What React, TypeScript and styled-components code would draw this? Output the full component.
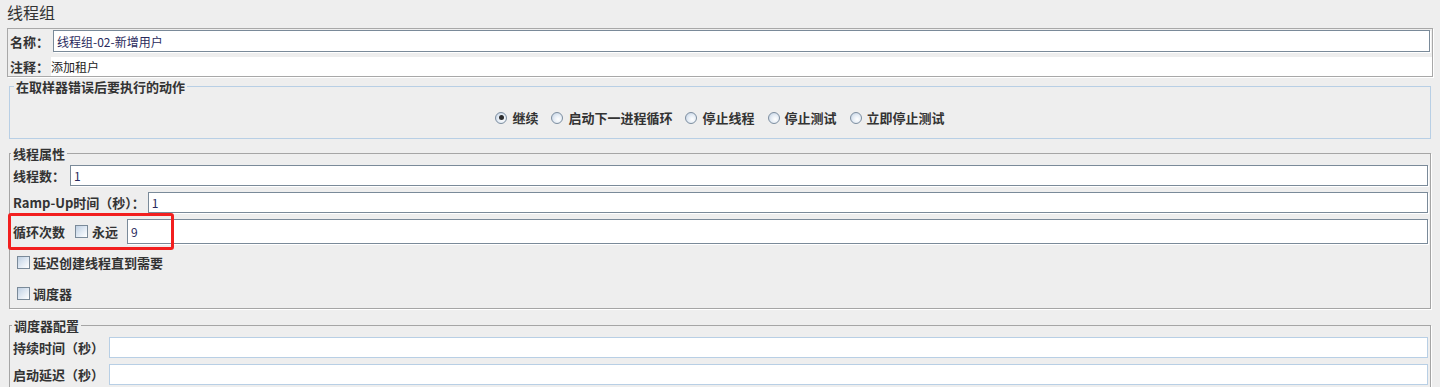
import * as React from "react";
import styled, { createGlobalStyle } from "styled-components";

const GlobalStyle = createGlobalStyle`
  html, body {
    margin: 0;
    padding: 0;
    background: #eeeeee;
    overflow: hidden;
  }
  body {
    font-family: "Noto Sans CJK SC", "Liberation Sans", sans-serif;
    font-size: 12px;
    color: #333333;
  }
  #root {
    width: 1440px;
    height: 387px;
    overflow: hidden;
  }
`;

const Page = styled.div`
  padding: 0 7px;
`;

const Title = styled.h1`
  margin: 0;
  height: 28px;
  font-size: 16px;
  line-height: 24px;
  font-weight: 400;
  color: #333;
`;

const NamePanel = styled.div`
  border: 1px solid #a8a8a8;
  box-shadow: 1px 1px 0 #fff;
  padding: 1px 0 0 2px;
`;

const Row = styled.div<{ $height?: number }>`
  display: flex;
  align-items: center;
  height: ${(p) => p.$height ?? 21}px;
`;

const NameRow = styled(Row)`
  padding-right: 2px;
  margin-bottom: 5px;
`;

const Label = styled.span<{ $gap?: number; $lead?: number }>`
  font-size: 13px;
  font-weight: 700;
  white-space: nowrap;
  color: #333;
  margin-left: ${(p) => p.$lead ?? 0}px;
  margin-right: ${(p) => p.$gap ?? 4}px;
`;

const Field = styled.input<{ $disabled?: boolean }>`
  flex: 1;
  min-width: 0;
  align-self: stretch;
  box-sizing: border-box;
  margin: 0;
  padding: 0 3px;
  border: 1px solid ${(p) => (p.$disabled ? "#b8cfe5" : "#7a8a99")};
  box-shadow: ${(p) => (p.$disabled ? "none" : "1px 1px 0 #fff")};
  background: #fff;
  font-family: "Noto Sans CJK SC", "Liberation Sans", sans-serif;
  font-size: 12px;
  color: #2a2a5c;
  outline: none;
`;

const CommentValue = styled.div`
  flex: 1;
  align-self: stretch;
  background: #fff;
  font-size: 12px;
  line-height: 19px;
  color: #222;
`;

const Group = styled.fieldset<{ $top: number; $color: string; $etched?: boolean }>`
  margin: ${(p) => p.$top}px 2px 0 2px;
  padding: 0;
  min-width: 0;
  border: 1px solid ${(p) => p.$color};
  box-shadow: ${(p) => (p.$etched ? "1px 1px 0 #fff" : "none")};
`;

const Legend = styled.legend<{ $offset: number }>`
  margin-left: ${(p) => p.$offset}px;
  padding: 0 2px;
  font-size: 13px;
  font-weight: 700;
  line-height: 13px;
  color: #333;
`;

const RadioBar = styled.div`
  display: flex;
  justify-content: center;
  align-items: center;
  gap: 13px;
  padding: 15px 0 11px;
`;

const Choice = styled.label`
  display: flex;
  align-items: center;
  gap: 5px;
  font-size: 13px;
  font-weight: 700;
  color: #333;
`;

const RadioDot = styled.span<{ $on?: boolean }>`
  display: inline-flex;
  align-items: center;
  justify-content: center;
  box-sizing: border-box;
  width: 12px;
  height: 12px;
  border-radius: 50%;
  border: 1px solid #7d8ea0;
  background: radial-gradient(circle at 62% 62%, #ffffff 0%, #e6edf5 45%, #bccde0 100%);

  &::after {
    content: "";
    width: 5px;
    height: 5px;
    border-radius: 50%;
    background: ${(p) => (p.$on ? "#2b2b2b" : "transparent")};
  }
`;

const Box = styled.span`
  display: inline-block;
  box-sizing: border-box;
  width: 13px;
  height: 13px;
  border: 1px solid #7a8a99;
  background: linear-gradient(135deg, #bfd0e3 0%, #e3ebf4 55%, #ffffff 100%);
`;

const Stack = styled.div<{ $pad: string }>`
  display: flex;
  flex-direction: column;
  gap: 6px;
  padding: ${(p) => p.$pad};
`;

const LoopRow = styled(Row)`
  position: relative;
`;

const Highlight = styled.div`
  position: absolute;
  top: -6px;
  left: -5px;
  width: 166px;
  height: 37px;
  box-sizing: border-box;
  border: 3px solid #f21f1f;
  border-radius: 3px;
  pointer-events: none;
`;

const CheckRow = styled.label<{ $indent?: number }>`
  display: flex;
  align-items: center;
  gap: 3px;
  height: 25px;
  padding-left: ${(p) => p.$indent ?? 4}px;
  font-size: 13px;
  font-weight: 700;
  color: #333;
`;

const actions = ["继续", "启动下一进程循环", "停止线程", "停止测试", "立即停止测试"];

export default function App() {
  return (
    <>
      <GlobalStyle />
      <Page>
        <Title>线程组</Title>

        <NamePanel>
          <NameRow $height={22}>
            <Label $gap={4}>名称：</Label>
            <Field defaultValue="线程组-02-新增用户" readOnly />
          </NameRow>
          <Row $height={19}>
            <Label $gap={2}>注释：</Label>
            <CommentValue>添加租户</CommentValue>
          </Row>
        </NamePanel>

        <Group $top={3} $color="#b8cfe5">
          <Legend $offset={4}>在取样器错误后要执行的动作</Legend>
          <RadioBar>
            {actions.map((a, i) => (
              <Choice key={a}>
                <RadioDot $on={i === 0} />
                {a}
              </Choice>
            ))}
          </RadioBar>
        </Group>

        <Group $top={8} $color="#a5a5a5" $etched>
          <Legend $offset={1}>线程属性</Legend>
          <Stack $pad="5px 2px 2px 3px">
            <Row>
              <Label $gap={5}>线程数：</Label>
              <Field defaultValue="1" readOnly />
            </Row>
            <Row>
              <Label $gap={3}>Ramp-Up时间（秒）：</Label>
              <Field defaultValue="1" readOnly />
            </Row>
            <LoopRow $height={25}>
              <Label $gap={10}>循环次数</Label>
              <Box />
              <Label $gap={9} $lead={4}>
                永远
              </Label>
              <Field defaultValue="9" readOnly />
              <Highlight />
            </LoopRow>
            <CheckRow>
              <Box />
              延迟创建线程直到需要
            </CheckRow>
            <CheckRow>
              <Box />
              调度器
            </CheckRow>
          </Stack>
        </Group>

        <Group $top={10} $color="#a5a5a5" $etched>
          <Legend $offset={2}>调度器配置</Legend>
          <Stack $pad="5px 2px 6px 3px">
            <Row>
              <Label $gap={5}>持续时间（秒）</Label>
              <Field $disabled readOnly />
            </Row>
            <Row>
              <Label $gap={5}>启动延迟（秒）</Label>
              <Field $disabled readOnly />
            </Row>
          </Stack>
        </Group>
      </Page>
    </>
  );
}
